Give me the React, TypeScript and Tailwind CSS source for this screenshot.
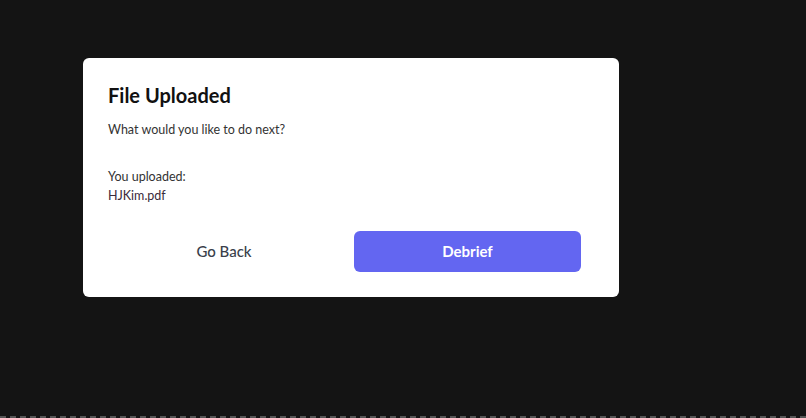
export default function App() {
  return (
    <div
      className="relative w-[806px] h-[418px] bg-[#141414] overflow-hidden"
      style={{ fontFamily: "Lato, 'Noto Sans', sans-serif" }}
    >
      <div className="absolute left-[83px] top-[58px] w-[536px] h-[239px] bg-white rounded-[6px] pl-[25px] pr-[38px] pt-[24px]">
        <h2 className="text-[20px] leading-[26px] font-bold text-[#111111]">File Uploaded</h2>
        <p className="mt-[13px] text-[12.5px] leading-[18px] text-[#333333]">What would you like to do next?</p>
        <p className="mt-[28px] text-[12.5px] leading-[19px] text-[#333333]">You uploaded:</p>
        <p className="text-[12.5px] leading-[19px] text-[#3a2a3a]">HJKim.pdf</p>
        <div className="mt-[26px] flex gap-[14px]">
          <button className="w-[232px] h-[41px] text-[15px] font-medium text-[#3a3f4b]">Go Back</button>
          <button className="w-[227px] h-[41px] rounded-[6px] bg-[#6366f1] text-[15px] font-bold text-white">Debrief</button>
        </div>
      </div>
      <div className="absolute left-0 bottom-0 w-full h-[2px] border-b-2 border-dashed border-[#555555]" />
    </div>
  );
}
